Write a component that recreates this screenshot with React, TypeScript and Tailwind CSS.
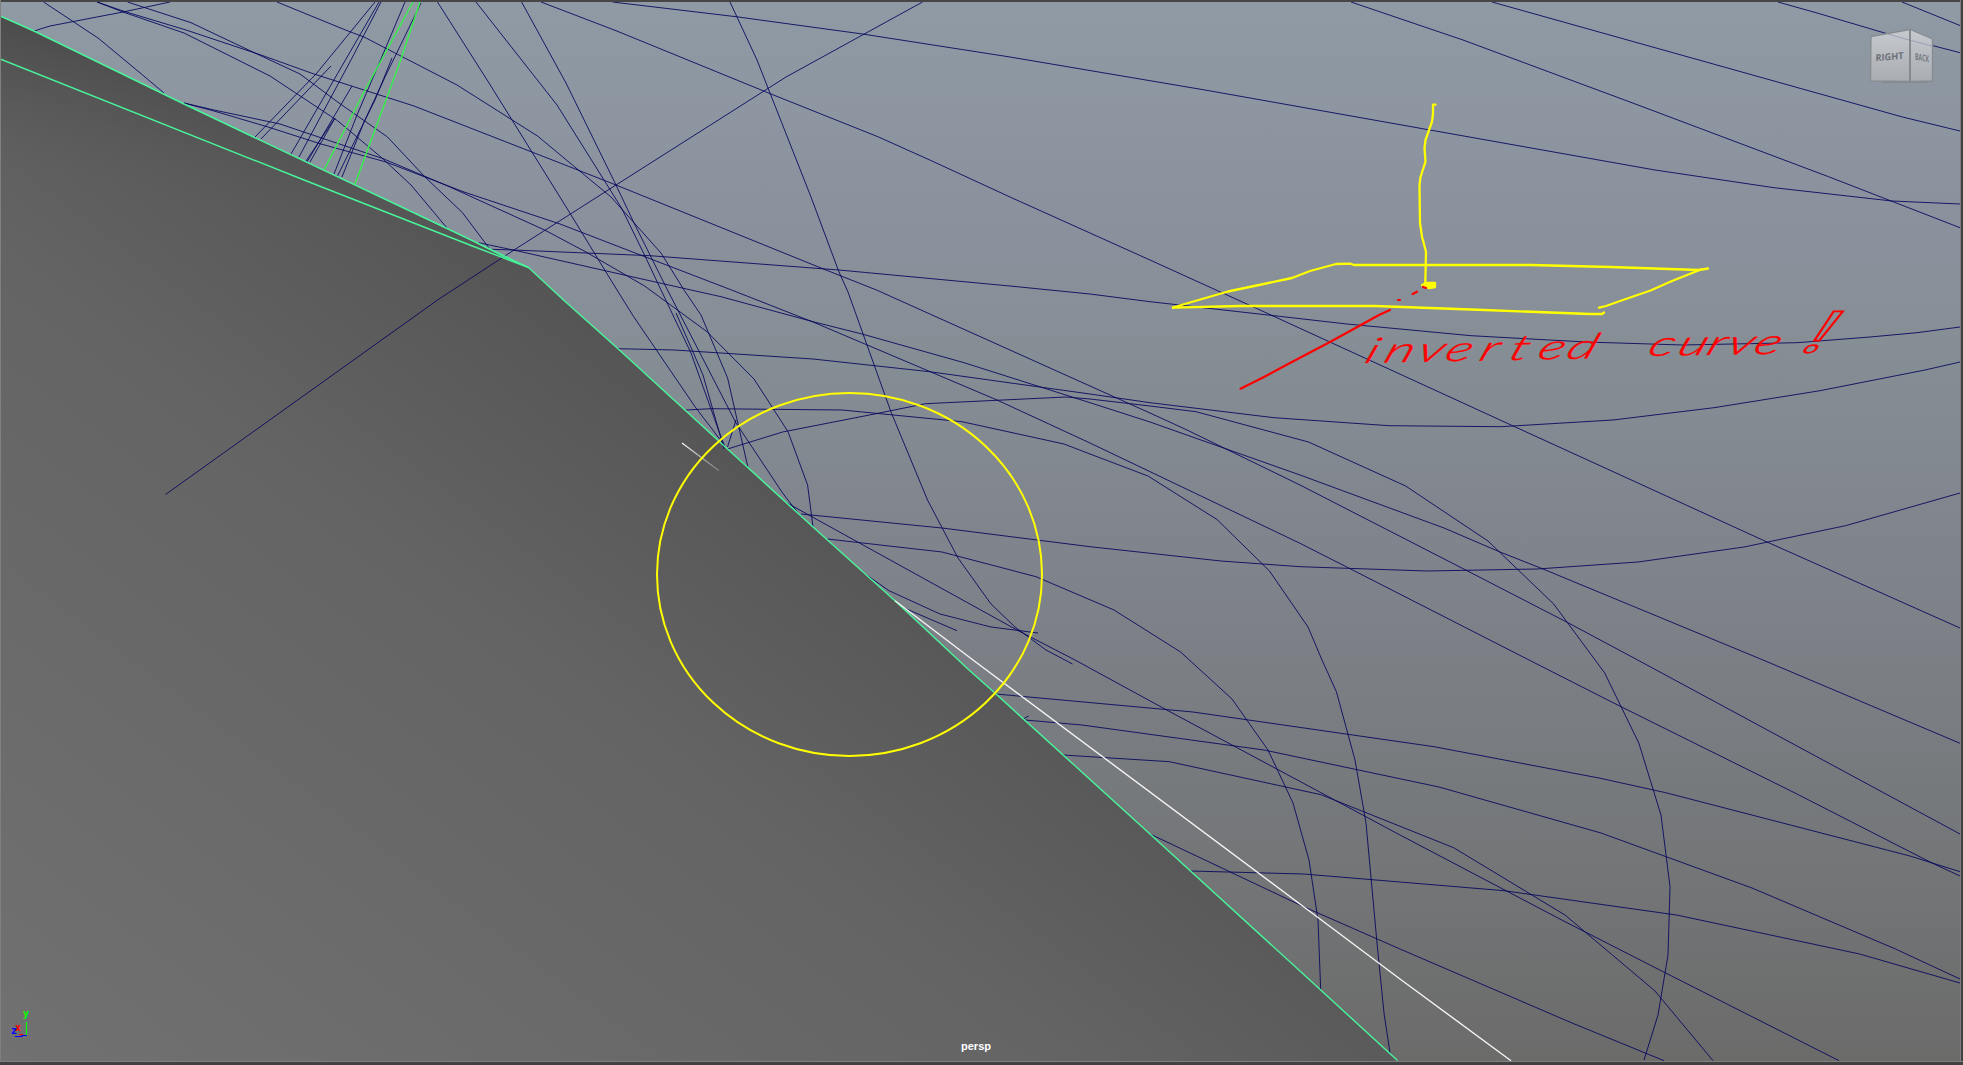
import React from "react";

// Wireframe curves of the scene, in viewport pixels.
const CURVES: string[] = [
  "43.6,2 98,38 139,72 164,93",
  "34,31 50,26 123,12 170,2",
  "97,2 123,11 186,30 261,55 314,74 414,106 560,163 616,185 821,268 876.5,290 1090,386 1150,413 1187,430 1300,485 1467,570.7 1566,621.7 1637.7,660 1960,834",
  "97,2 123,12 184,33 270,76 337.5,120.7 382,158 411,185 447,228",
  "127.5,2 191,22.7 250,50.7 300,74 339,103 387.5,137 425,177 462.5,212.7 489,248",
  "184,103 214,110 280,124 384,159 450,187 544.6,230 586,252 644.6,286 707,331.7 754,379 788,431.7 807.6,485 813,527",
  "184,103 214,111 268,127 321,144 386,162 464,192 560,224 643,256 731.6,290 813,322 997,400 1090,443 1300,543.3 1350.7,569 1529,660 1621,706.7 1795,793 1931.4,862.7 1960,876",
  "277,2 348,31 364,37 457,85 537.5,136 611,197 661,253 684,290 701,315 727.6,378 748,467.7",
  "437.5,2 450,21.7 489,83 568,210 617,290 633.7,316.7 695,406.7 725,446",
  "476,2 557,105 604,180 621.5,208 645,256 661,290 691,353 721,437 725,447",
  "521.6,2 566,83 616,185 634,223 667.5,290 736,423 782.6,493 801,517",
  "676,313 703,375 724,449",
  "727.5,447 736,420",
  "478.6,242.7 521,251.7 628.6,276 691,290 721,296.7 813,321.7 862,334 964,362.7 1090,402.7 1150,422 1300,475 1444,528 1500,552 1543,569 1763,660 1960,743.3",
  "491,249.3 514,250 650,255.7 839,270 1010,286 1090,294 1150,301.7 1274,315.7 1347,324 1471,335.7 1586,342 1682.6,345 1797,342.7 1870,337 1917,332.7 1960,327",
  "922.5,2 786,77 764,91 616,185 514,250 437.5,300 165.5,494.5",
  "730,2 757,60 768,88 811,197 839,272 848,292 891,412 927.5,500 958,558 991,604 1015,627 1046,650 1072.5,664",
  "541,2 616,30.7 771,94 878.6,137 932,161 1010,197 1150,260 1255.6,308 1391,370 1511,425 1767,542 1960,628",
  "612.5,2 736,16.7 862.5,34 1010,57 1205,90 1430,130 1655,170 1774,187.7 1892,201 1960,204",
  "1351,2 1463,40 1638,105 1828.5,176.7 1960,227.7",
  "1492,2 1630,40.7 1902.5,117 1960,131",
  "1778,2 1816,12.7 1888,34 1960,52.7",
  "1902,2 1960,25.5",
  "375,2 316,74 255,137",
  "331,66 261,139",
  "379,2 291,154",
  "381,2 352,58 299,157",
  "352,86 307,162",
  "335,118 310,162",
  "335,118 306,161",
  "405,2 375,73 357,115 334,174",
  "392,58 375,100 337.5,176",
  "421,3 386,75 364,122 342,177",
  "618,348.7 674.5,350 813,359 929.6,371.7 1090,394 1150,402.7 1274,417.7 1389,425.7 1501,426.7 1613,420 1714,407.7 1820,390.7 1925,370 1960,362",
  "686,410 711,408.7 842,410 962,421.7 1064,444 1090,454 1148,476 1217,519.5 1269.5,571 1308,627 1322,660 1336.4,691.7 1355,760 1366,823 1377,943 1384,1013 1390,1053",
  "727.5,449 782.6,432 874.5,414 925.5,403.7 1066,397 1090,399 1150,406 1196,411.7 1308.5,442 1405.7,486 1488,541 1553.7,604 1604.7,673 1638.8,743 1661,815 1670,886.7 1668,955 1658,1015 1644,1060",
  "784.7,501.7 1017,630 1075,660 1168,710.7 1321,792.7 1400,835 1565,921.7 1665.7,973 1839,1060.7",
  "801,514 942,528 1090,546.7 1221,561 1300,566.7 1427,571 1537,569 1638,562 1744,547 1845.5,525.7 1960,493",
  "827.6,539 942,552 1036,576.7 1114,610 1180.6,652 1232,699 1268,750 1293,803 1309,860 1318,920 1320.7,990",
  "862,571.7 889,590.7 940,614 991,627 1038,633",
  "901,606.7 957,630.7",
  "996,694 1193,712 1434,746.7 1599,778 1665.7,792.7 1910,856 1960,871.7",
  "1023,719 1028.6,716",
  "1025,720 1082,725 1264,750 1439,787 1601,833 1752,888 1895.5,949 1960,979",
  "1063,755 1169.6,761.7 1321,794.7 1453.6,847.7 1565,915 1655,991 1713,1060.7",
  "1150,834 1303.6,906.7 1400,949 1572,1023 1664,1060.7",
  "1190,871 1303.6,874 1400,882 1504,890.7 1676.5,915 1859.6,954 1960,983",
];

const EDGE =
  "0,16 34,31 184,104 253.5,137 446,228 528.5,267.5 563.5,300 618,348.7 727.5,449 813,527 895,600.7 969,670 996,694 1150,834 1320.7,990 1397.5,1060.5";

function Scene() {
  return (
    <svg className="block h-[1065px] w-[1963px]" viewBox="0 0 1963 1065" fill="none">
      <defs>
        <linearGradient id="body" gradientUnits="userSpaceOnUse" x1="528" y1="267" x2="-39" y2="1023">
          <stop offset="0" stopColor="#555555" />
          <stop offset="0.33" stopColor="#646464" />
          <stop offset="1" stopColor="#717171" />
        </linearGradient>
        <linearGradient id="rim" gradientUnits="userSpaceOnUse" x1="58" y1="28" x2="30" y2="166">
          <stop offset="0" stopColor="#444444" stopOpacity="0.65" />
          <stop offset="1" stopColor="#555555" stopOpacity="0" />
        </linearGradient>
        <linearGradient id="tick" gradientUnits="userSpaceOnUse" x1="682" y1="443" x2="719" y2="471">
          <stop offset="0" stopColor="#ffffff" />
          <stop offset="1" stopColor="#999999" stopOpacity="0.6" />
        </linearGradient>
        <linearGradient id="face" x1="0" y1="0" x2="0" y2="1">
          <stop offset="0" stopColor="#c6cacf" />
          <stop offset="1" stopColor="#a9adb1" />
        </linearGradient>
      </defs>

      <polygon points={`${EDGE} 1397.5,1062 0,1062`} fill="url(#body)" />
      <polygon points="0,16 184,104 446,228 528,267 0,160" fill="url(#rim)" />

      <g stroke="#07075e" strokeWidth="0.95" strokeOpacity="0.92">
        {CURVES.map((points) => (
          <polyline key={points} points={points} />
        ))}
      </g>

      <g stroke="#35f04a" strokeWidth="1.4">
        <polyline points="413,2 364,92 324,170" />
        <polyline points="420,2 400,62 355,184" />
      </g>
      <g stroke="#48f59a" strokeWidth="1.4">
        <polyline points={EDGE} />
        <polyline points="0,59 304,180 475,247 528.5,267.5" />
        <polyline points="475,242 500,255 528.5,267.5" strokeWidth="1" />
      </g>
      <polyline points="895,600.7 973,660 1317,916.7 1400,979 1511,1060.7" stroke="#f4f4f4" strokeWidth="1.4" />
      <line x1="682" y1="443" x2="719" y2="470.7" stroke="url(#tick)" strokeWidth="1.2" />

      <g stroke="#ffff00" strokeWidth="2.3" strokeLinecap="round" strokeLinejoin="round">
        <ellipse cx="849.5" cy="574.5" rx="192.5" ry="181.5" strokeWidth="2" />
        <polyline points="1173,307.7 1183,304.5 1228,291.5 1247,287.5 1292,278 1310,271 1336,264 1350,263.7 1354,265 1531,265 1610,267 1698.7,270 1708,268.5" />
        <polyline points="1701,269.5 1672,281 1650.5,290.5 1620,301 1606,306 1599,307.7" />
        <polyline points="1173,307.7 1240,306 1375,306 1471,309.5 1590,314 1602,314 1604,312.5" />
        <polyline points="1435.6,104.7 1433,104.7 1433,114 1432,121.7 1425.5,140 1424.5,148 1425.5,161.7 1420.5,177 1419.5,185 1420,223 1422,236.7 1426,251.7 1425.3,283" />
        <path d="M1422 285 L1426 283 L1435 283 L1435 287 L1429 288 L1423 286 Z" fill="#ffff00" />
      </g>
      <g stroke="#ff0000" strokeWidth="2.2" strokeLinecap="round" strokeLinejoin="round">
        <polyline points="1240.5,388.7 1262,378 1290,363 1330,342 1360,325.5 1379,315 1390,310" />
        <path d="M1398 300 H1400 M1412.6 294 L1417 291.7 M1423 287 L1426 288" />
      </g>

      <g
        fill="#ff0000"
        stroke="#ff0000"
        strokeWidth="0.4"
        fontFamily="Lato, 'Open Sans', sans-serif"
        fontStyle="italic"
        fontWeight="300"
      >
        <text
          transform="translate(1358 363) rotate(-1.1) scale(1.6 1) skewX(-14)"
          fontSize="35"
          x="3 15 35.5 53 74.5 93 111 129"
          y="0"
        >
          inverted
        </text>
        <text transform="translate(1646 356) rotate(-0.9) scale(1.6 1) skewX(-14)" fontSize="35" x="0 18.5 36.5 49 66" y="0">
          curve
        </text>
        <text
          transform="translate(1797 352) scale(1.5 1) skewX(-26)"
          fontFamily="'Noto Sans', sans-serif"
          fontStyle="normal"
          fontWeight="400"
          fontSize="57"
          x="0"
          y="0"
          fill="none"
          strokeWidth="1.8"
        >
          !
        </text>
      </g>

      <g stroke="#868b90" strokeWidth="1.3" strokeLinejoin="round">
        <polygon points="1871,36.7 1909.7,29.5 1909.7,81.3 1870.5,81" fill="url(#face)" />
        <polygon points="1910.3,29.5 1932.5,39 1932.5,81 1910.3,81.3" fill="url(#face)" />
        <path d="M1882 82.3 H1928" />
        <path d="M1910 30 V81" strokeWidth="1.8" />
        <path d="M1888 34 L1911 40.5 L1932 46" stroke="#737aa0" strokeOpacity="0.5" strokeWidth="1" />
      </g>
      <g fill="#6c7179" fontFamily="'Open Sans', 'Noto Sans', sans-serif" fontWeight="700">
        <text transform="translate(1875.5 61.3) skewY(-5)" fontSize="9.5" textLength="28" lengthAdjust="spacingAndGlyphs">
          RIGHT
        </text>
        <text
          transform="translate(1915 59.8) skewY(10)"
          fontSize="9.5"
          textLength="14"
          lengthAdjust="spacingAndGlyphs"
          fillOpacity="0.9"
        >
          BACK
        </text>
      </g>

      <g strokeWidth="1.2">
        <path d="M26.5 1022 V1035" stroke="#00ff00" />
        <path d="M19 1034.5 H23" stroke="#ff0000" />
        <path d="M15 1036.5 H22 L22 1035.5 H27" stroke="#0000ff" />
      </g>
      <g fontFamily="'DejaVu Sans Mono', monospace" fontWeight="700" fontSize="10">
        <text x="11" y="1034" fill="#0000ff">z</text>
        <text x="15" y="1031" fill="#ff0000">x</text>
        <text x="23" y="1017" fill="#00ff00">y</text>
      </g>
    </svg>
  );
}

export default function App() {
  return (
    <main className="relative h-[1065px] w-[1963px] overflow-hidden bg-[linear-gradient(to_bottom,#8f9aa4_0px,#8b929e_200px,#858d94_370px,#7f838b_570px,#777a7d_780px,#6b6b6a_1062px)]">
      <Scene />
      <div className="absolute inset-x-0 top-0 h-0.5 bg-[#464646]" />
      <div className="absolute inset-y-0 left-0 w-px bg-[#808080]" />
      <div className="absolute inset-y-0 right-0 w-[3px] border-l border-[#808080] bg-[#414141]" />
      <div className="absolute inset-x-0 bottom-0 h-1 border-t border-[#808080] bg-[#414141]" />
      <div className="absolute inset-x-0 bottom-[11px] flex justify-center pr-[11px] font-['Liberation_Sans',sans-serif] text-[11px] leading-4 font-bold text-white">
        persp
      </div>
    </main>
  );
}
